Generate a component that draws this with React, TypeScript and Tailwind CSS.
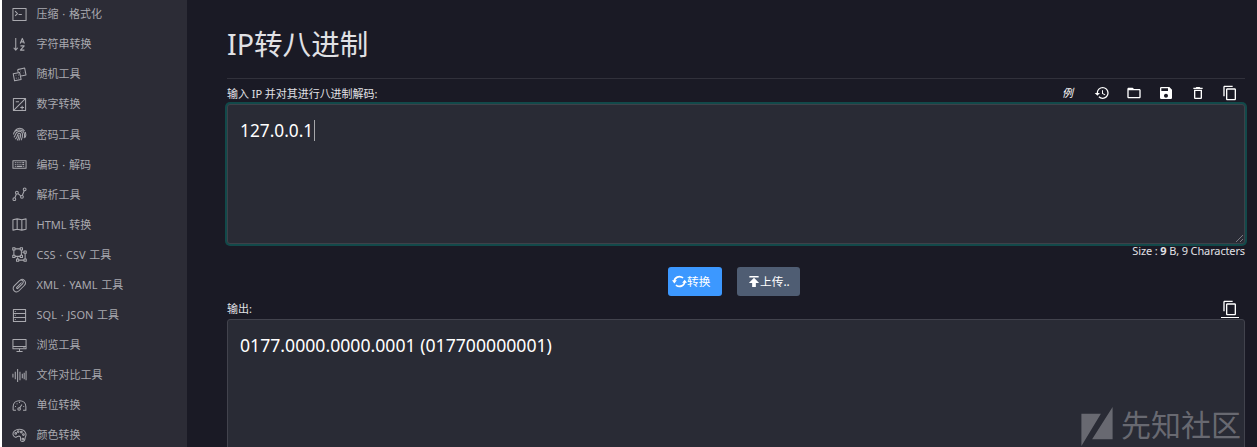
import React from 'react';
import { MdHistory, MdFolderOpen, MdSave, MdDeleteOutline, MdContentCopy } from 'react-icons/md';

const latin = "font-['Noto_Sans','Noto_Sans_CJK_SC',sans-serif]";

type MenuItem = { label: string; icon: React.ReactNode };

const menu: MenuItem[] = [
  { label: '压缩 · 格式化', icon: <><path d="M1 1.5h14v13H1z" /><path d="M3.3 4.5 5.8 7 3.3 9.5M7 8h3.5" /></> },
  { label: '字符串转换', icon: <><path d="M4 1v13M1.8 11.5 4 14l2.2-2.5" /><path d="m8.8 7 2.2-5.5L13.2 7M9.5 5.2h3M9 9.5h4l-4 4.5h4.2" strokeWidth="1.2" /></> },
  { label: '随机工具', icon: <><path d="m6 2.8 7.5-1.7 1.4 7.4-5.2 1.2M6 2.8l.6 3" /><path d="m1.3 7.1 6.9-1.2 1.5 7.4-7 1.4z" /><path d="M4 9h.5M7 11.7h.5M4.2 12h.5M6.6 8.5h.5M9 4.3h.4M12.5 6.2h.4" strokeWidth="1.4" /></> },
  { label: '数字转换', icon: <><path d="M1.5 1.5h13v13h-13zM14 2 2 14" /><path d="M4 5h3.5M8.8 11.3h4M10.8 9.3v4" /></> },
  { label: '密码工具', icon: <path d="M3 4.2c3-3.9 7.8-3.8 10.4.1M1.6 8c.5-5.2 9.7-7.2 11.5-1.1.4 1.5.4 3.5-.1 5M2 11c2.3-1.9 1-5.6 4.9-6.3 5.7-.9 4.8 6 2.8 9.4M3.5 13c3-2.4 1.6-5.4 3.7-6.2 3.2-.7 2.1 4.4.1 7.6M5.4 14.2c1.5-1.7 2.1-3.7 2.1-6M14.2 5.4c.8 2 .7 4-.1 5.8" /> },
  { label: '编码 · 解码', icon: <><path d="M1 4h14v8H1z" /><path d="M3 6h1m1 0h1m1 0h1m1 0h1m1 0h2M3 8h1m1 0h1m1 0h1m1 0h1m1 0h2M3 10h1m1 0h6m1 0h1" /></> },
  { label: '解析工具', icon: <><circle cx="2.5" cy="13" r="1.5" /><circle cx="5.2" cy="6" r="1.5" /><circle cx="10.6" cy="10.5" r="1.5" /><circle cx="13.5" cy="2.5" r="1.5" /><path d="m3 11.5 1.7-4M6.4 7l3 2.5M11 9l2-5" /></> },
  { label: 'HTML 转换', icon: <path d="m1 3 4.5-1 5 1 4.5-1v11l-4.5 1-5-1L1 14zM5.5 2v11M10.5 3v11" /> },
  { label: 'CSS · CSV 工具', icon: <><path d="M3.2 2h5.6M2 3.2v5.6M3.2 10h5.6M10 3.2v5.6M11 5.5h2M14 6.7v6.1M7.2 14h5.6M6 11v2" /><path d="M.8.8h2.4v2.4H.8zM8.8.8h2.4v2.4H8.8zM.8 8.8h2.4v2.4H.8zM8.8 8.8h2.4v2.4H8.8zM12.8 4.3h2.4v2.4h-2.4zM12.8 12.8h2.4v2.4h-2.4zM4.8 12.8h2.4v2.4H4.8z" /></> },
  { label: 'XML · YAML 工具', icon: <path d="M10.2 4.8 5.3 9.7c-1 1 .2 2.2 1.2 1.2l4.7-4.7c2.5-2.5-1-5.5-3.4-3.1L2.4 8.5c-3.5 3.5 1.6 8.6 5.1 5.1l5.6-5.6c3.2-3.2-.6-8.4-4.4-5.8" /> },
  { label: 'SQL · JSON 工具', icon: <><path d="M1.5 1.5h13v13h-13zM2 5.8h12M2 10.2h12" /><path d="M3 3.8h1m-1 4h1m-1 4.5h1" /></> },
  { label: '浏览工具', icon: <><path d="M1 1.5h14v10H1zM1 9h14M8 12v2.5M4.8 14.5h6.5" /><path d="M12.3 10h1" /></> },
  { label: '文件对比工具', icon: <path d="M1 6v4M3.5 4v8M6 1v14M8.5 4v9M11 6v5M13 5v7M15 3v10" /> },
  { label: '单位转换', icon: <><path d="M1.2 13V9.4C1.2 5.5 4 3 8 3s6.8 2.5 6.8 6.4V13h-3M1.2 13h3" /><path d="m8 11 2.6-4M3.2 9h1m7.8 0h1M5 6l.8.6M8 4v1.2" /><circle cx="7.6" cy="11.7" r="1.4" /></> },
  { label: '颜色转换', icon: <><path d="M6.6 8.7c2.3-.3 2.8 1 2.5 3-.4 4 4.5 3.6 4.8-.6.2-3 1.7-2.2.9-5C13.4.9 6.7.1 2.7 3 .4 4.8.2 8.8 3.5 9.9c1.6.5 1.2-1 3.1-1.2z" /><circle cx="4" cy="5.8" r=".9" /><circle cx="6.6" cy="3.8" r=".9" /><circle cx="10" cy="4.3" r=".9" /><circle cx="12.2" cy="7" r=".9" /><circle cx="11.5" cy="11.8" r=".9" /></> },
];

function Sidebar() {
  return (
    <aside className="h-[447px] w-[187px] shrink-0 overflow-hidden border-l-2 border-white bg-[#2c2c36]">
      <nav className="flex flex-col pl-[10px]">
        {menu.map((item, index) => (
          <div key={item.label} className={`flex h-[30.1px] shrink-0 items-center gap-[9.5px] text-[#a9a9af] ${index === 0 ? '-mt-[0.9px]' : ''}`}>
            <svg viewBox="0 0 16 16" className="size-[15px] shrink-0" fill="none" stroke="currentColor" strokeWidth="1.1" strokeLinejoin="round">{item.icon}</svg>
            <span className={`text-[11px] leading-[16px] whitespace-nowrap ${item.label.includes('·') ? '[word-spacing:0.9px]' : ''}`}>{item.label}</span>
          </div>
        ))}
      </nav>
    </aside>
  );
}

function Toolbar() {
  return (
    <div className="-mt-[3px] flex h-4 items-center text-white">
      <span className="mr-[18px] w-[14px] text-[11px] leading-4 italic">例</span>
      <MdHistory className="mr-4 size-4" />
      <MdFolderOpen className="mr-4 size-4" />
      <MdSave className="mr-4 size-4" />
      <MdDeleteOutline className="mr-4 size-4" />
      <MdContentCopy className="size-4" />
    </div>
  );
}

function Actions() {
  return (
    <div className="mt-[8px] ml-[441px] flex gap-[15px] text-[11.7px] text-white">
      <button className="flex h-[29px] w-[54px] items-center rounded-[3px] bg-[#3c98ff] pl-[4px]">
        <svg viewBox="0 0 16 16" className="size-[15px] shrink-0" fill="none" stroke="currentColor" strokeWidth="1.8">
          <path d="M2.5 8C2.5 3.8 7.5 1 11.8 4.2M13.5 8c0 4.2-5 7-9.3 3.8" />
          <path d="M0 6.6h5.2L2.5 10zM10.8 9.4H16L13.5 6z" fill="currentColor" stroke="none" />
        </svg>
        <span className="pt-px whitespace-nowrap">转换</span>
      </button>
      <button className="flex h-[29px] w-[63px] items-center rounded-[3px] bg-[#4f5d73] pl-[11px]">
        <svg viewBox="0 0 12 14" className="h-[13px] w-[12px] shrink-0" fill="currentColor"><path d="M1 1h10v1.6H1zM6 3l5.5 5.5H8V13H4V8.5H.5z" /></svg>
        <span className="pt-px whitespace-nowrap">上传..</span>
      </button>
    </div>
  );
}

function Watermark() {
  return (
    <div className="absolute right-[16px] bottom-[1px] flex h-[43px] items-center text-[#686971]">
      <svg viewBox="0 0 32 40" className="mt-[3px] mr-[8px] h-[39px] w-8" fill="currentColor"><path d="M0 7h20L0 40zM32 0v33H11z" /></svg>
      <span className="text-[30px] leading-[43px]">先知社区</span>
    </div>
  );
}

export default function App() {
  return (
    <div className={`relative flex h-[447px] w-full overflow-hidden bg-[#1a1a25] ${latin}`}>
      <Sidebar />
      <main className="min-w-0 flex-1 pr-[12px] pl-[40px] text-[#e1e1e5]">
        <h1 className="flex h-[79px] items-center border-b border-[#31313b] pt-[9px] text-[28.6px] leading-[40px]">IP转八进制</h1>
        <div className="mt-[6px] flex h-[19px] items-center justify-between pr-[7px]">
          <label className="-mt-[2px] text-[11px] leading-4 tracking-[-0.04px]">输入 IP 并对其进行八进制解码:</label>
          <Toolbar />
        </div>
        <section className="relative flex h-[140px] rounded-[3px] border border-[#3d4149] bg-[#292b35] px-[12px] pt-[14px] shadow-[0_0_0_2px_#12494a]">
          <span className="h-[24px] text-[17.3px] leading-6 text-white">127.0.0.1</span>
          <span className="mt-px ml-px h-[21px] w-px bg-[#a5a6aa]" />
          <svg viewBox="0 0 7 7" className="absolute right-px bottom-px size-[7px]" fill="none" stroke="#a0a1a6" strokeWidth="0.7"><path d="m0 7 7-7M4 7l3-3" /></svg>
        </section>
        <div className="h-[15px] text-right text-[11px] leading-[14px] tracking-[-0.13px]">Size : <strong className="font-bold">9</strong> B, 9 Characters</div>
        <Actions />
        <div className="mt-[2px] flex h-[21px] items-center justify-between pr-[7px]">
          <span className="text-[11px] leading-4">输出:</span>
          <span className="mr-[-1px] border-b border-white px-px pb-px text-white"><MdContentCopy className="size-[16px]" /></span>
        </div>
        <section className="h-[150px] rounded-t-[3px] border border-[#42434d] bg-[#292b35] px-[12px] pt-[13px] text-[17.65px] leading-6 text-white">0177.0000.0000.0001 (017700000001)</section>
      </main>
      <Watermark />
    </div>
  );
}
